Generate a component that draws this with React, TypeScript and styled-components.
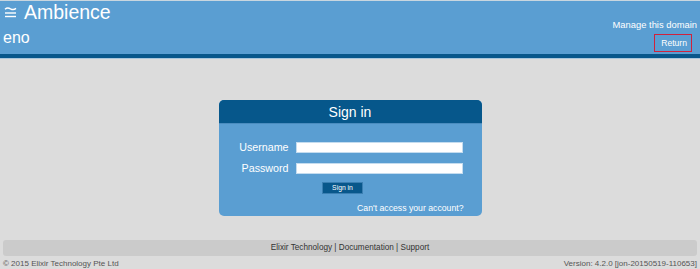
import React, { FC } from "react";
import styled, { createGlobalStyle } from "styled-components";

const GlobalStyle = createGlobalStyle`
  html, body {
    margin: 0;
    padding: 0;
    background: #dcdcdc;
    font-family: "Liberation Sans", Arial, sans-serif;
  }
`;

const Page = styled.div`
  width: 700px;
  height: 269px;
  overflow: hidden;
  display: flex;
  flex-direction: column;
`;

const Header = styled.header`
  background: #5a9ed2;
  border-top: 1px solid #c9d6df;
  height: 53px;
  display: flex;
  justify-content: space-between;
  padding: 0 3px;
  color: white;
`;

const Stripe = styled.div`
  height: 4px;
  background: #08578b;
  border-bottom: 1px solid #a9c6dc;
`;

const Brand = styled.div`
  display: flex;
  flex-direction: column;
`;

const TitleRow = styled.div`
  display: flex;
  align-items: center;
  gap: 7px;
  height: 22px;
  padding-left: 1px;
`;

const AppName = styled.span`
  font-size: 19.5px;
  line-height: 22px;
`;

const Domain = styled.div`
  font-size: 16px;
  line-height: 20px;
  margin-top: 5px;
`;

const Actions = styled.div`
  display: flex;
  flex-direction: column;
  align-items: flex-end;
  padding-top: 18px;
  gap: 3px;
`;

const Manage = styled.span`
  font-size: 9.4px;
  line-height: 12px;
`;

const Return = styled.span`
  font-size: 8.6px;
  line-height: 10px;
  border: 1px solid #d0213c;
  padding: 3px 4px 3px 6px;
  margin-right: 5px;
`;

const Main = styled.main`
  display: flex;
  justify-content: center;
  padding-top: 41px;
`;

const Box = styled.div`
  width: 263px;
  height: 116px;
  border-radius: 5px;
  background: #5a9ed2;
  overflow: hidden;
  display: flex;
  flex-direction: column;
`;

const BoxTitle = styled.div`
  background: #06578b;
  height: 23px;
  border-bottom: 1px solid #4a8cbf;
  color: white;
  font-size: 14px;
  line-height: 24px;
  text-align: center;
`;

const Form = styled.div`
  display: grid;
  grid-template-columns: 70px 167px;
  column-gap: 7px;
  row-gap: 9px;
  padding: 17px 0 0 0;
  align-items: center;
`;

const Label = styled.label`
  color: white;
  font-size: 10.7px;
  text-align: right;
`;

const Field = styled.input`
  box-sizing: border-box;
  width: 167px;
  height: 11px;
  border: 1px solid #c4dcef;
  background: white;
  padding: 0;
  margin: 0;
`;

const ButtonRow = styled.div`
  display: flex;
  justify-content: center;
  padding: 8px 15px 0 0;
`;

const SignInButton = styled.button`
  width: 41px;
  height: 12px;
  background: #08578b;
  border: 1px solid #3b7fb2;
  color: white;
  font-family: "Liberation Sans", Arial, sans-serif;
  font-size: 6.8px;
  padding: 0;
  line-height: 10px;
`;

const Forgot = styled.div`
  text-align: right;
  color: white;
  font-size: 8.7px;
  padding: 9px 18px 0 0;
`;

const FooterBar = styled.div`
  margin: 24px 3px 0;
  height: 16px;
  border-radius: 3px;
  background: #cbcbcb;
  color: #333;
  font-size: 8.2px;
  line-height: 16px;
  text-align: center;
`;

const Bottom = styled.div`
  display: flex;
  justify-content: space-between;
  padding: 2px 3px 0;
  color: #555;
  font-size: 8px;
  line-height: 11px;
`;

const MenuIcon: FC = () => (
  <svg width="13" height="11" viewBox="0 0 13 11">
    <path d="M1 2.2 Q3.5 0 6.5 1.8 Q9.5 3.5 12 1.4" stroke="white" strokeWidth="1.4" fill="none" />
    <line x1="1" y1="6" x2="12" y2="6" stroke="white" strokeWidth="1.4" />
    <line x1="1" y1="9.5" x2="12" y2="9.5" stroke="white" strokeWidth="1.4" />
  </svg>
);

const App: FC = () => {
  return (
    <Page>
      <GlobalStyle />
      <Header>
        <Brand>
          <TitleRow>
            <MenuIcon />
            <AppName>Ambience</AppName>
          </TitleRow>
          <Domain>eno</Domain>
        </Brand>
        <Actions>
          <Manage>Manage this domain</Manage>
          <Return>Return</Return>
        </Actions>
      </Header>
      <Stripe />
      <Main>
        <Box>
          <BoxTitle>Sign in</BoxTitle>
          <Form>
            <Label>Username</Label>
            <Field type="text" />
            <Label>Password</Label>
            <Field type="password" />
          </Form>
          <ButtonRow>
            <SignInButton>Sign in</SignInButton>
          </ButtonRow>
          <Forgot>Can't access your account?</Forgot>
        </Box>
      </Main>
      <FooterBar>Elixir Technology | Documentation | Support</FooterBar>
      <Bottom>
        <span>© 2015 Elixir Technology Pte Ltd</span>
        <span>Version: 4.2.0 [jon-20150519-110653]</span>
      </Bottom>
    </Page>
  );
};

export default App;
